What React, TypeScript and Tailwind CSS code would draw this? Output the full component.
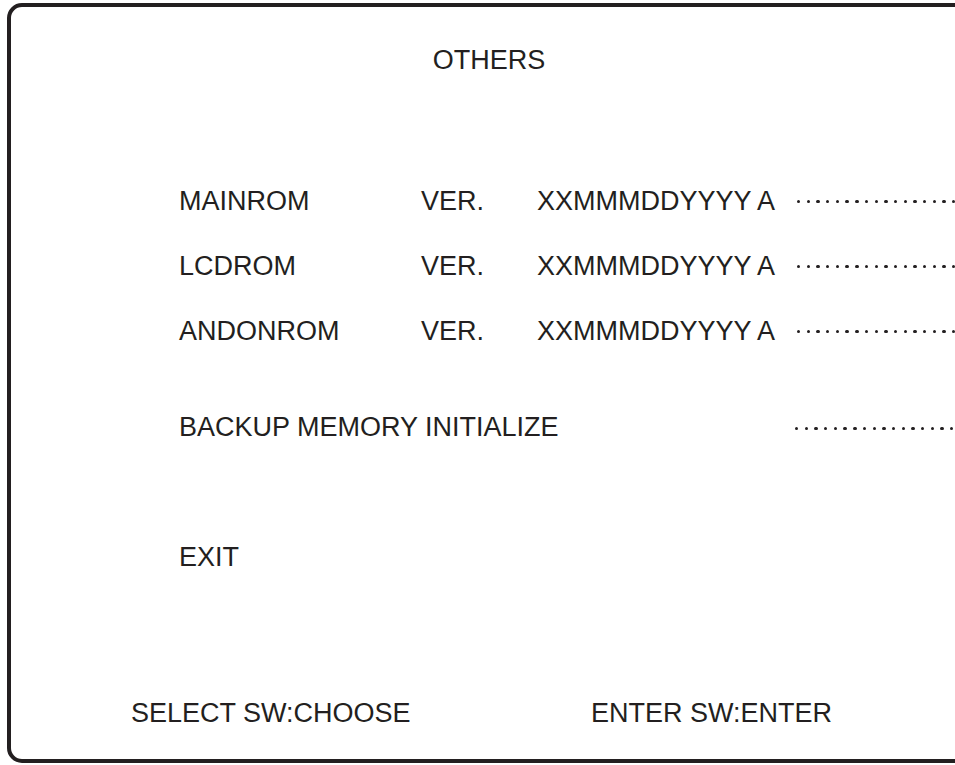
const ROMS = ["MAINROM", "LCDROM", "ANDONROM"];

function Dots({ className = "" }: { className?: string }) {
  return (
    <div className={`flex gap-[6.3px] mt-[12px] shrink-0 ${className}`}>
      {Array.from({ length: 20 }).map((_, i) => (
        <div key={i} className="h-[3.4px] w-[3.4px] shrink-0 rounded-full bg-[#231f20]" />
      ))}
    </div>
  );
}

export default function App() {
  return (
    <div className="w-[955px] h-[765px] overflow-hidden bg-white font-['Liberation_Sans',Arial,sans-serif] text-[#231f20]">
      <div className="ml-[7px] mt-[3px] w-[964px] h-[760px] border-4 border-[#231f20] rounded-[15px] flex flex-col text-[27px] leading-[27px]">
        <div className="pt-[40px] text-center">OTHERS</div>

        <div className="mt-[114px] flex flex-col gap-[38px] pl-[168px]">
          {ROMS.map((rom) => (
            <div key={rom} className="flex whitespace-nowrap">
              <span className="w-[242px] shrink-0">{rom}</span>
              <span className="w-[116px] shrink-0">VER.</span>
              <span className="w-[260px] shrink-0">XXMMMDDYYYY A</span>
              <Dots />
            </div>
          ))}
        </div>

        <div className="mt-[69px] flex pl-[168px] whitespace-nowrap">
          <span className="w-[616px] shrink-0">BACKUP MEMORY INITIALIZE</span>
          <Dots className="mt-[13px]" />
        </div>

        <div className="mt-[103px] pl-[168px]">EXIT</div>

        <div className="mt-[129px] flex whitespace-nowrap pl-[120px]">
          <span className="w-[460px] shrink-0">SELECT SW:CHOOSE</span>
          <span>ENTER SW:ENTER</span>
        </div>
      </div>
    </div>
  );
}
